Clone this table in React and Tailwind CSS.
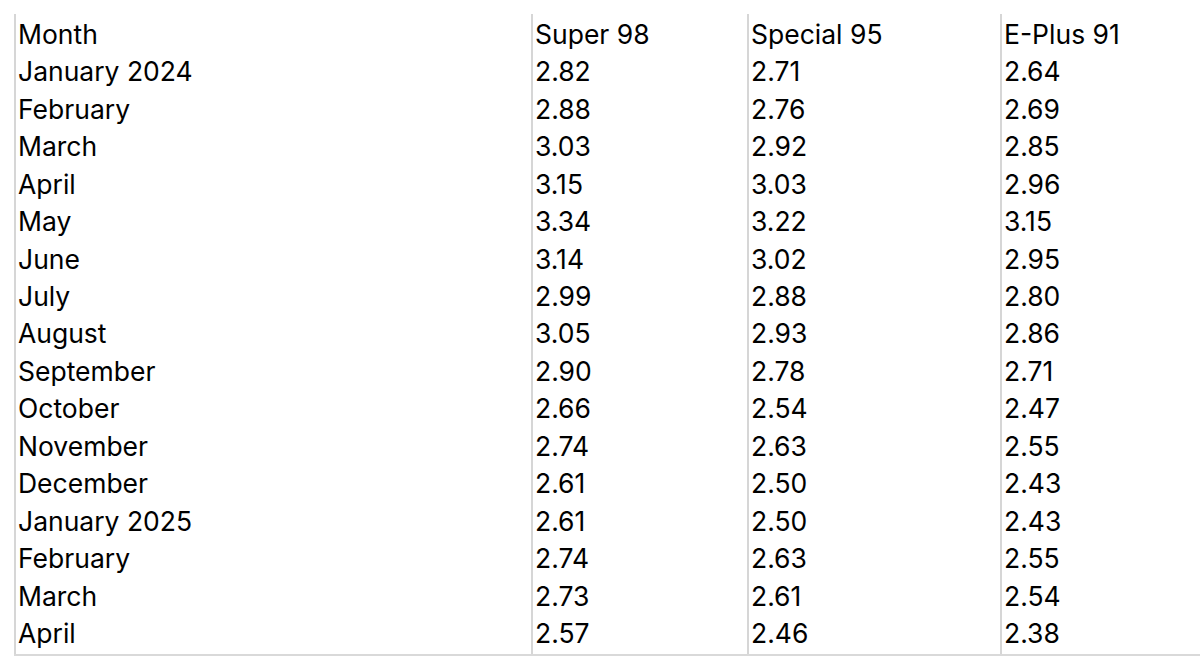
import React from "react";

const rows = [
  ["Month", "Super 98", "Special 95", "E-Plus 91"],
  ["January 2024", "2.82", "2.71", "2.64"],
  ["February", "2.88", "2.76", "2.69"],
  ["March", "3.03", "2.92", "2.85"],
  ["April", "3.15", "3.03", "2.96"],
  ["May", "3.34", "3.22", "3.15"],
  ["June", "3.14", "3.02", "2.95"],
  ["July", "2.99", "2.88", "2.80"],
  ["August", "3.05", "2.93", "2.86"],
  ["September", "2.90", "2.78", "2.71"],
  ["October", "2.66", "2.54", "2.47"],
  ["November", "2.74", "2.63", "2.55"],
  ["December", "2.61", "2.50", "2.43"],
  ["January 2025", "2.61", "2.50", "2.43"],
  ["February", "2.74", "2.63", "2.55"],
  ["March", "2.73", "2.61", "2.54"],
  ["April", "2.57", "2.46", "2.38"],
];

const widths = ["w-[517px]", "w-[216px]", "w-[253px]", "flex-1"];

export default function App() {
  return (
    <div className="w-[1200px] h-[666px] bg-white overflow-hidden pt-[14px] pl-[14px]">
      <div className="flex h-[642px] border-b-2 border-[#d9d9d9] text-black text-[26.5px] leading-none font-['Inter',sans-serif]">
        {widths.map((w, ci) => (
          <div key={ci} className={`${w} border-l-2 border-[#d6d6d6] flex flex-col`}>
            {rows.map((r, ri) => (
              <div key={ri} className="h-[37.45px] flex items-end pb-[4px] pl-[2px] whitespace-nowrap">
                {r[ci]}
              </div>
            ))}
          </div>
        ))}
      </div>
    </div>
  );
}
